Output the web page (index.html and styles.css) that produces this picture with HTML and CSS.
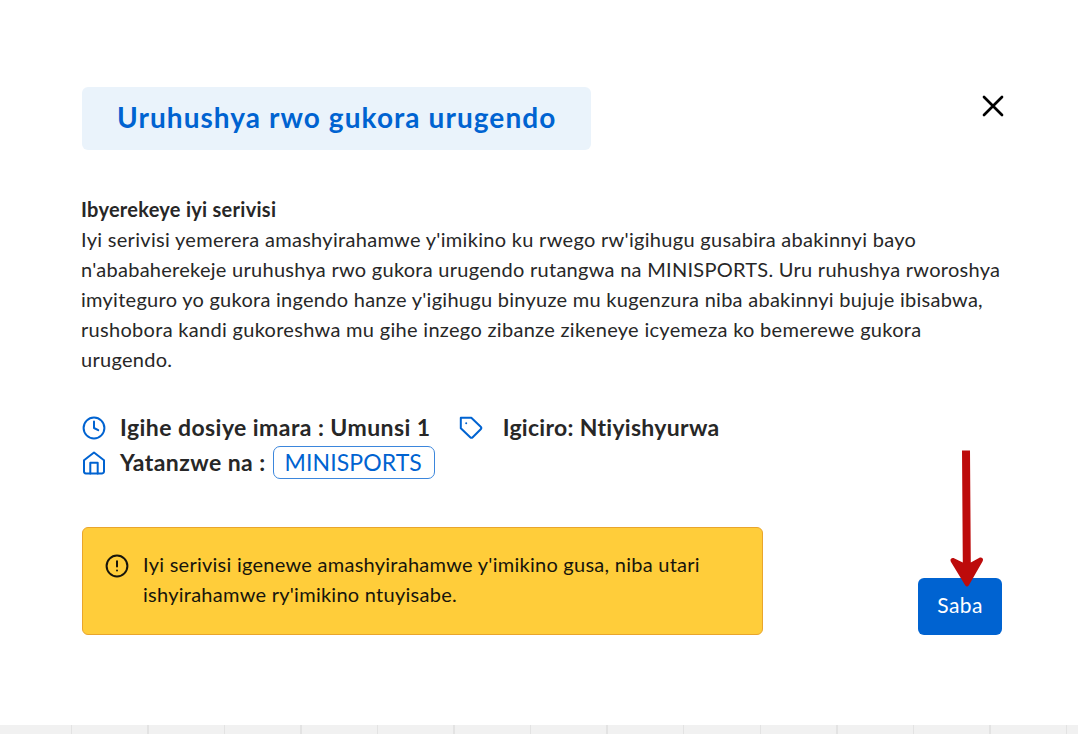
FILE: index.html
```html
<!DOCTYPE html>
<html lang="rw">
<head>
    <meta charset="UTF-8">
    <meta name="viewport" content="width=device-width, initial-scale=1.0">
    <title>Uruhushya rwo gukora urugendo</title>
    <link rel="stylesheet" href="styles.css">
</head>
<body>
    <div class="modal">
        <div class="modal-header">
            <h1 class="title">Uruhushya rwo gukora urugendo</h1>
            <button class="close" aria-label="Funga">
                <svg width="22" height="22" viewBox="0 0 22 22"><path d="M2 2l18 18M20 2L2 20" fill="none" stroke="#000" stroke-width="2.7" stroke-linecap="round"/></svg>
            </button>
        </div>

        <div class="about">
            <h2>Ibyerekeye iyi serivisi</h2>
            <p>
                <span class="wide">Iyi serivisi yemerera amashyirahamwe y'imikino ku rwego rw'igihugu gusabira abakinnyi bayo</span><br>
                n'ababaherekeje uruhushya rwo gukora urugendo rutangwa na MINISPORTS. Uru ruhushya rworoshya<br>
                imyiteguro yo gukora ingendo hanze y'igihugu binyuze mu kugenzura niba abakinnyi bujuje ibisabwa,<br>
                <span class="wide">rushobora kandi gukoreshwa mu gihe inzego zibanze zikeneye icyemeza ko bemerewe gukora</span><br>
                urugendo.
            </p>
        </div>

        <div class="details">
            <div class="row">
                <svg class="icon" viewBox="0 0 24 24"><circle cx="12" cy="12" r="10.4"/><path d="M12 5.6V12l4.2 2.2"/></svg>
                <span>Igihe dosiye imara : Umunsi 1</span>
                <svg class="icon tag" viewBox="0 0 24 24"><path d="M1.8 1.8h10.5l9.4 8.9a1.8 1.8 0 0 1 0 2.5l-8 8a1.8 1.8 0 0 1-2.5 0L1.8 12.2z"/><path d="M7.2 7.3h.01"/></svg>
                <span class="price">Igiciro: Ntiyishyurwa</span>
            </div>
            <div class="row">
                <svg class="icon" viewBox="0 0 24 24"><path d="M2 9.2L12 1.5l10 7.7v11.4a1.8 1.8 0 0 1-1.8 1.8H3.8a1.8 1.8 0 0 1-1.8-1.8z"/><path d="M8.3 22.4V11.8h7.4v10.6"/></svg>
                <span>Yatanzwe na :</span>
                <a class="badge">MINISPORTS</a>
            </div>
        </div>

        <div class="footer">
            <div class="alert">
                <svg class="icon dark" viewBox="0 0 24 24"><circle cx="12" cy="12" r="10.4"/><path d="M12 7.2v5.2M12 16.5h.01"/></svg>
                <p>
                    Iyi serivisi igenewe amashyirahamwe y'imikino gusa, niba utari<br>
                    ishyirahamwe ry'imikino ntuyisabe.
                </p>
            </div>
            <div class="action">
                <button class="submit">Saba</button>
                <svg class="arrow" width="34" height="138" viewBox="0 0 34 138"><path d="M12 .5h8l.8 112 8.2-4.500c3-1.500 5 1 3.500 3.500L19 135q-2 3-4 0L1 112c-1.500-2.500.5-5 3.500-3.500l8.300 4z" fill="#bd0b0b"/></svg>
            </div>
        </div>
    </div>

    <div class="page-strip"></div>
</body>
</html>
```
FILE: styles.css
```css
* {
    box-sizing: border-box;
}
body {
    margin: 0;
    height: 734px;
    overflow: hidden;
    display: flex;
    flex-direction: column;
    background: #fff;
    color: #272727;
    font-family: Lato, "Open Sans", sans-serif;
}
.modal {
    height: 725px;
    padding: 87px 76px 0 82px;
}
.modal-header {
    display: flex;
    justify-content: space-between;
    align-items: flex-start;
    height: 63px;
}
.title {
    margin: 0;
    width: 509px;
    height: 63px;
    padding-left: 35px;
    background: #eaf3fb;
    border-radius: 6px;
    color: #0063d1;
    font-size: 28px;
    letter-spacing: 1.07px;
    line-height: 60px;
    white-space: nowrap;
}
.close {
    margin-top: 8px;
    margin-right: -2px;
    padding: 0;
    border: none;
    background: none;
    cursor: pointer;
}
.close svg {
    display: block;
}
.about {
    margin-top: 44px;
    margin-left: -1px;
    font-size: 20px;
    letter-spacing: 0.27px;
    line-height: 30.1px;
    white-space: nowrap;
}
.about h2,
.about p {
    margin: 0;
    font-size: 20px;
}
.wide {
    letter-spacing: 0.3px;
}
.details {
    margin-top: 35px;
    font-size: 23px;
    font-weight: bold;
    letter-spacing: 0.44px;
    white-space: nowrap;
}
.row {
    display: flex;
    align-items: center;
    height: 35px;
}
.row span {
    margin-top: -1px;
}
.row .price {
    letter-spacing: 0.3px;
}
.icon {
    width: 24px;
    height: 24px;
    margin-right: 14px;
    flex: none;
    fill: none;
    stroke: #0063d1;
    stroke-width: 2;
    stroke-linecap: round;
    stroke-linejoin: round;
}
.row .icon {
    margin-top: 2px;
}
.tag {
    margin-left: 28px;
    margin-right: 20px;
}
.badge {
    display: block;
    width: 162px;
    height: 33px;
    margin-left: 7px;
    padding-left: 11px;
    border: 1px solid #3b86dc;
    border-radius: 7px;
    color: #0063d1;
    font-weight: normal;
    letter-spacing: 0.1px;
    line-height: 30px;
}
.footer {
    display: flex;
    justify-content: space-between;
    align-items: flex-end;
    margin-top: 47px;
}
.alert {
    display: flex;
    width: 681px;
    height: 108px;
    padding: 21px 23px;
    background: #ffcd3a;
    border: 1px solid #e9a52c;
    border-radius: 6px;
    color: #17150c;
    font-size: 20px;
    letter-spacing: 0.26px;
    line-height: 30px;
    white-space: nowrap;
}
.alert p {
    margin: 0;
}
.dark {
    margin-top: 5px;
    margin-left: -1px;
    stroke: #17150c;
}
.action {
    position: relative;
}
.submit {
    display: block;
    width: 84px;
    height: 57px;
    padding: 0 0 3px;
    border: none;
    border-radius: 6px;
    background: #0063d1;
    color: #fff;
    font-family: inherit;
    font-size: 21px;
    letter-spacing: 0.4px;
    cursor: pointer;
}
.arrow {
    position: absolute;
    left: 32px;
    top: -128px;
}
.page-strip {
    height: 9px;
    background: repeating-linear-gradient(90deg, #f1f1f1 0 71px, #e3e3e3 71px 72.5px, #f1f1f1 72.5px 76.5px);
}
```
